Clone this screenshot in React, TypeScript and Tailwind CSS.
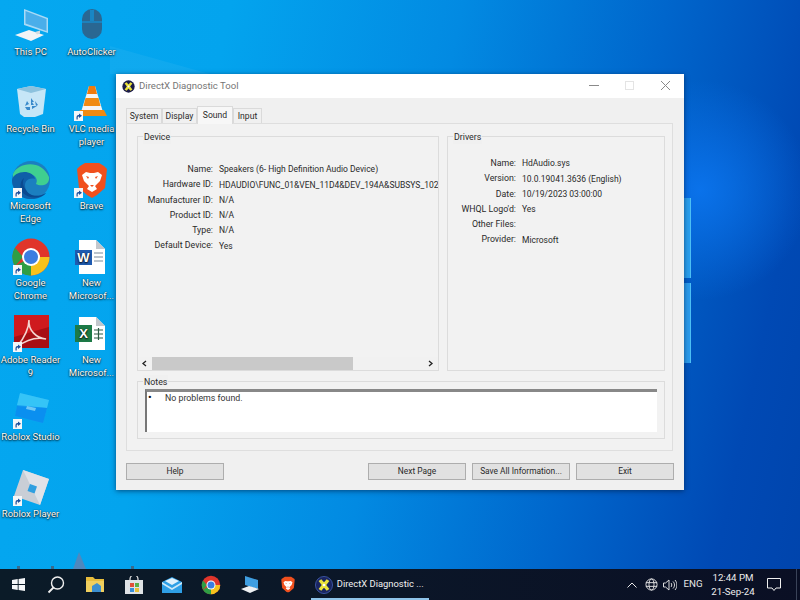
import React from "react";

const Shortcut = () => (
  <svg viewBox="0 0 9 10" className="absolute left-[2px] bottom-[1px] w-[9px] h-[10px]">
    <rect width="9" height="10" fill="#f4f6f8" />
    <path d="M2.5 8.5V6a2 2 0 0 1 2-2h.5V2.500L8 4.700 5 7V5.500h-.5a.8.8 0 0 0-.8.8v2.200z" fill="#1d4f9c" />
  </svg>
);

const Ico = ({ children, shortcut }: { children: React.ReactNode; shortcut?: boolean }) => (
  <div className="relative w-[40px] h-[38px] shrink-0">
    <svg viewBox="0 0 40 38" className="w-[40px] h-[38px]">{children}</svg>
    {shortcut && <Shortcut />}
  </div>
);

const ChromeArt = () => (
  <g>
    <circle cx="20" cy="19" r="18.5" fill="#e0352b" />
    <path d="M20 19 L4 28.300 A18.500 18.500 0 0 0 20 37.500 Z" fill="#2f9e44" />
    <path d="M4 28.300A18.500 18.500 0 0 1 4 9.800L12 19z" fill="#2f9e44" />
    <path d="M20 19h18.500A18.500 18.500 0 0 1 20 37.500z" fill="#f6c21c" />
    <circle cx="20" cy="19" r="9" fill="#fff" />
    <circle cx="20" cy="19" r="7" fill="#3b7de0" />
  </g>
);

const BraveArt = () => (
  <g>
    <path d="M8 5l5-3h14l5 3 3 3-2 19-8 7-5 3-5-3-8-7-2-19z" fill="#f0501e" />
    <path d="M20 31l-5-3 2-3-5-5-2-6 4-3 4 1h4l4-1 4 3-2 6-5 5 2 3z" fill="#fff" />
    <path d="M14 15l3 1-1 2zM26 15l-3 1 1 2zM18 24h4l-2 2z" fill="#f0501e" />
  </g>
);

const DirectX = ({ s, ring }: { s: number; ring?: boolean }) => (
  <svg viewBox="0 0 20 20" width={s} height={s} className="shrink-0">
    <circle cx="10" cy="10" r="9.500" fill={ring ? "#1a2560" : "#1c1c48"} stroke={ring ? "#4a68c0" : "none"} strokeWidth="0.8" />
    <path d="M4 5.500 7 3.500 10 7l3-3.500 3 2L12.500 10l3.500 4.500-3 2L10 13l-3 3.500-3-2L7.500 10z" fill="#ece33a" />
    <circle cx="10" cy="10" r="1.500" fill="#fff" />
  </svg>
);

const desktop: { label: string[]; shortcut?: boolean; art: React.ReactNode }[] = [
  {
    label: ["This PC"],
    art: (
      <g>
        <path d="M13 2 37 11V26L13 18z" fill="#a8daf6" />
        <path d="M14.500 4 35.500 12V24L14.500 16.500z" fill="#4aaeea" />
        <path d="M4 28 18 23 33 28 20 34z" fill="#f2f4f6" />
        <path d="M24 25l5-1.500v3l-3 1z" fill="#d5dde2" />
      </g>
    ),
  },
  {
    label: ["Recycle Bin"],
    art: (
      <g>
        <path d="M6 5 20 2 35 5 32 30 24 33H13L9 30z" fill="#c6e6f7" />
        <path d="M6 5 20 2 35 5 20 9z" fill="#8cc2de" />
        <path d="M20 14l3 4h-2l2 3-3 0zM14 22l2-5 2 3zM26 22l-5 3v-3z" fill="#3a8acb" />
        <path d="M14 23h5v3h-3zM24 17l3 4-2 1z" fill="#3a8acb" />
      </g>
    ),
  },
  {
    label: ["Microsoft", "Edge"],
    shortcut: true,
    art: (
      <g>
        <circle cx="20" cy="19" r="19" fill="#1b7fc0" />
        <path d="M2 13C6 2 30-3 38 16c1 8-8 10-13 7 3-6-3-11-10-10C9 13 4 15 2 19z" fill="#3fcf90" />
        <path d="M1 19C3 9 22 8 24 18c-8-2-12 4-9 11 3 6 12 8 20 3-6 8-24 9-30-2-3-4-4-7-4-11z" fill="#0f5fa8" />
        <path d="M15 29c3 6 12 8 20 3-4 5-16 7-23 0-4-5-3-12 1-15-2 5-1 8 2 12z" fill="#0b4a90" />
      </g>
    ),
  },
  { label: ["Google", "Chrome"], shortcut: true, art: <ChromeArt /> },
  {
    label: ["Adobe Reader", "9"],
    shortcut: true,
    art: (
      <g>
        <rect x="3" y="0" width="35" height="33" fill="#a80f14" />
        <path d="M3 0H38V12L3 22z" fill="#cf1a1e" />
        <path d="M18 5c-1 10 7 18 17 19-9-2-20 1-29 8 7-9 12-18 12-27z" fill="none" stroke="#f5d5d0" strokeWidth="1.600" />
      </g>
    ),
  },
  {
    label: ["Roblox Studio"],
    shortcut: true,
    art: (
      <g>
        <path d="M9 1 38 8 32 31 4 24z" fill="#1aa3f0" />
        <path d="M9 1 38 8 36 16 6 13z" fill="#35c4f7" />
        <path d="M6 14 36 16 32 31 4 24z" fill="#0a8ff0" />
        <path d="M16 14l9 2-1 3-9-2z" fill="#6fc8f5" />
      </g>
    ),
  },
  {
    label: ["Roblox Player"],
    shortcut: true,
    art: (
      <g>
        <path d="M12 1 38 10 29 36 3 27z" fill="#c9ced6" />
        <path d="M12 1 38 10 29 36z" fill="#dfe2e8" />
        <path d="M19 15l7 2.500-2.500 7-7-2.500z" fill="#2f9fe0" />
      </g>
    ),
  },
  {
    label: ["AutoClicker"],
    art: (
      <g>
        <rect x="10" y="2" width="20" height="30" rx="10" fill="#2a6792" />
        <path d="M19 3v11M21 3v11M10 15h20" stroke="#0f9ce6" strokeWidth="1.200" />
      </g>
    ),
  },
  {
    label: ["VLC media", "player"],
    shortcut: true,
    art: (
      <g>
        <path d="M17 2h6l8 26H9z" fill="#f4f4f4" />
        <path d="M17 2h6l2 8H15z" fill="#ef7b0e" />
        <path d="M13.500 14h13l2 8h-17z" fill="#f08a12" />
        <path d="M8 26h24l3 6H5z" fill="#f08a12" />
      </g>
    ),
  },
  { label: ["Brave"], shortcut: true, art: <BraveArt /> },
  {
    label: ["New", "Microsof..."],
    art: (
      <g>
        <path d="M7 2H24L33 11V36H7z" fill="#fff" />
        <path d="M24 2V11H33z" fill="#c3c7cc" />
        <rect x="3" y="12" width="17" height="15" fill="#1f5bb0" />
        <text x="11.500" y="24" textAnchor="middle" fontSize="13" fontWeight="700" fill="#fff" fontFamily="Liberation Sans, sans-serif">W</text>
        <path d="M22 15h9M22 19h9M22 23h9" stroke="#7a8a99" strokeWidth="1.200" />
      </g>
    ),
  },
  {
    label: ["New", "Microsof..."],
    art: (
      <g>
        <path d="M7 2H24L33 11V35H7z" fill="#fff" />
        <path d="M24 2V11H33z" fill="#c3c7cc" />
        <rect x="3" y="10" width="17" height="17" fill="#1d7a47" />
        <text x="11.500" y="23" textAnchor="middle" fontSize="13" fontWeight="700" fill="#fff" fontFamily="Liberation Sans, sans-serif">X</text>
        <path d="M22 15h9M22 19h9M22 23h9M26.500 13v12" stroke="#2e5a44" strokeWidth="1.200" />
      </g>
    ),
  },
];

const Row = ({ k, v, w }: { k: string; v: string; w: string }) => (
  <div className="flex h-[15.25px] items-center whitespace-nowrap">
    <div className={`${w} shrink-0 text-right pr-[6px]`}>{k}</div>
    <div className="text-[8.5px]">{v}</div>
  </div>
);

const Legend = ({ children }: { children: React.ReactNode }) => (
  <div className="absolute -top-[7px] left-[5px] bg-[#f0f0f0] px-[1px] leading-[14px]">{children}</div>
);

const Btn = ({ children }: { children: React.ReactNode }) => (
  <div className="w-[98px] h-[17px] bg-[#e1e1e1] border border-[#adadad] flex items-center justify-center whitespace-nowrap text-[8.4px]">{children}</div>
);

const Tab = ({ children, active, w }: { children: React.ReactNode; active?: boolean; w: string }) => (
  <div
    className={`${w} flex items-center justify-center border border-[#dadada] border-b-0 text-[8.6px] ${
      active ? "h-[18px] bg-[#f7f7f7] z-10 -mb-[1px] relative" : "h-[15px] bg-[#f0f0f0]"
    }`}
  >
    {children}
  </div>
);

const TaskIcon = ({ children, w = "w-[38.7px]" }: { children: React.ReactNode; w?: string }) => (
  <div className={`${w} h-full flex items-center justify-center shrink-0`}>{children}</div>
);

export default function App() {
  return (
    <div className="relative w-[800px] h-[600px] overflow-hidden font-['Roboto','Noto_Sans',sans-serif] bg-[radial-gradient(circle_at_700px_190px,#0a72ea_0px,rgba(10,114,234,0)_110px),linear-gradient(102deg,#05a8f0_0%,#03a4ee_25%,#028ae2_50%,#0066cc_72%,#0049b4_90%,#0044ac_100%)]">
      {/* wallpaper details */}
      <div className="absolute left-[684px] top-[198px] w-[7px] h-[80px] bg-[#2aa0ee] border-r border-[#4dc0f5]" />
      <div className="absolute left-[684px] top-[283px] w-[7px] h-[80px] bg-[#2b9cec] border-r border-[#4dc0f5]" />
      <svg className="absolute left-[0px] top-[545px]" width="220" height="24" viewBox="0 0 220 24">
        <path d="M17 24v-3h3v3zM51 24v-3h3v3zM131 24v-3h3v3z" fill="#3a6a8c" />
        <path d="M73 24l6-17 7 17z" fill="#6a7fae" opacity="0.75" />
      </svg>
      <svg className="absolute left-[110px] top-[46px]" width="100" height="28" viewBox="0 0 100 28">
        <path d="M0 0 100 28H0z" fill="#fff" opacity="0.05" />
      </svg>

      {/* desktop icons */}
      <div className="absolute left-[0px] top-[7px] grid grid-flow-col grid-rows-[repeat(7,77px)] grid-cols-[61px_61px] text-white text-[9.5px] leading-[12.5px] [text-shadow:0_1px_2px_rgba(0,0,0,0.9),0_0_1px_rgba(0,0,0,0.8)]">
        {desktop.map((d, i) => (
          <div key={i} className="flex flex-col items-center">
            <Ico shortcut={d.shortcut}>{d.art}</Ico>
            <div className="text-center whitespace-nowrap pt-[1px]">
              {d.label.map((l) => (
                <div key={l}>{l}</div>
              ))}
            </div>
          </div>
        ))}
      </div>

      {/* window */}
      <div className="absolute left-[116px] top-[74px] w-[568px] h-[416px] bg-[#f0f0f0] flex flex-col text-[8.8px] text-[#2a2a2a] shadow-[0_1px_5px_rgba(0,30,70,0.65)]">
        <div className="h-[24px] bg-white flex items-center pl-[6px] shrink-0">
          <DirectX s={13} />
          <div className="ml-[4px] text-[#757575] text-[9.6px]">DirectX Diagnostic Tool</div>
          <div className="ml-auto flex items-center h-full">
            <svg width="82" height="24" viewBox="0 0 82 24" className="mr-[13px]">
              <path d="M0 11.500h10" stroke="#8a8a8a" />
              <rect x="36.500" y="7.500" width="8" height="8" fill="none" stroke="#e4e4e4" />
              <path d="M72 7l9 9M81 7l-9 9" stroke="#8a8a8a" />
            </svg>
          </div>
        </div>

        <div className="flex pl-[10px] pt-[8px] items-end shrink-0 h-[25px]">
          <Tab w="w-[36px]">System</Tab>
          <Tab w="w-[35px]">Display</Tab>
          <Tab active w="w-[36px]">Sound</Tab>
          <Tab w="w-[29px]">Input</Tab>
        </div>

        <div className="mx-[10px] w-[547px] h-[328px] border border-[#dedede] bg-[#f2f2f2] pl-[10px] pr-[7px] pt-[12px] shrink-0">
          <div className="flex gap-[8px] h-[235px]">
            <div className="relative w-[302px] border border-[#dcdcdc] flex flex-col">
              <Legend>Device</Legend>
              <div className="flex-1 pt-[25px] overflow-hidden">
                <Row w="w-[81px]" k="Name:" v="Speakers (6- High Definition Audio Device)" />
                <Row w="w-[81px]" k="Hardware ID:" v="HDAUDIO\FUNC_01&VEN_11D4&DEV_194A&SUBSYS_102" />
                <Row w="w-[81px]" k="Manufacturer ID:" v="N/A" />
                <Row w="w-[81px]" k="Product ID:" v="N/A" />
                <Row w="w-[81px]" k="Type:" v="N/A" />
                <Row w="w-[81px]" k="Default Device:" v="Yes" />
              </div>
              <div className="h-[13px] flex items-center bg-[#f1f1f1] shrink-0">
                <svg width="14" height="13" viewBox="0 0 14 13" className="shrink-0">
                  <path d="M8 4 5 6.500 8 9" fill="none" stroke="#222" strokeWidth="1.300" />
                </svg>
                <div className="w-[201px] h-full bg-[#c9c9c9]" />
                <div className="flex-1" />
                <svg width="14" height="13" viewBox="0 0 14 13" className="shrink-0">
                  <path d="M5 4 8 6.500 5 9" fill="none" stroke="#222" strokeWidth="1.300" />
                </svg>
              </div>
            </div>
            <div className="relative w-[218px] border border-[#dcdcdc] pt-[19px]">
              <Legend>Drivers</Legend>
              <Row w="w-[74px]" k="Name:" v="HdAudio.sys" />
              <Row w="w-[74px]" k="Version:" v="10.0.19041.3636 (English)" />
              <Row w="w-[74px]" k="Date:" v="10/19/2023 03:00:00" />
              <Row w="w-[74px]" k="WHQL Logo'd:" v="Yes" />
              <Row w="w-[74px]" k="Other Files:" v="" />
              <Row w="w-[74px]" k="Provider:" v="Microsoft" />
            </div>
          </div>
          <div className="relative mt-[10px] w-[528px] h-[58px] border border-[#dcdcdc] px-[7px] pt-[7px]">
            <Legend>Notes</Legend>
            <div className="h-[43px] bg-white border-t-[3px] border-l-2 border-t-[#888888] border-l-[#777777] flex items-start pl-[1px] text-[#333]">
              <div className="w-[17px] text-[#111] leading-[12px] text-[11px]">•</div>
              <div className="leading-[12px] text-[8.8px]">No problems found.</div>
            </div>
          </div>
        </div>

        <div className="flex px-[10px] pt-[12px] gap-[6px]">
          <Btn>Help</Btn>
          <div className="flex-1" />
          <Btn>Next Page</Btn>
          <Btn>Save All Information...</Btn>
          <Btn>Exit</Btn>
        </div>
      </div>

      {/* taskbar */}
      <div className="absolute left-0 right-0 bottom-0 h-[31px] bg-[linear-gradient(90deg,#0b1b28,#0b1628_50%,#0a0f24)] flex items-center text-white">
        <TaskIcon w="w-[37px]">
          <svg width="13" height="13" viewBox="0 0 13 13">
            <path d="M0 2l5.700-.9v5H0zM6.600 1 13 0v6.100H6.600zM0 7h5.700v5L0 11.100zM6.600 7H13v6l-6.400-1z" fill="#f4f6f8" />
          </svg>
        </TaskIcon>
        <TaskIcon>
          <svg width="18" height="18" viewBox="0 0 18 18">
            <circle cx="10.500" cy="7" r="6" fill="none" stroke="#f0f0f0" strokeWidth="1.400" />
            <path d="M6.500 11.500 1.500 16.500" stroke="#f0f0f0" strokeWidth="1.800" />
          </svg>
        </TaskIcon>
        <TaskIcon>
          <svg width="18" height="15" viewBox="0 0 18 15">
            <path d="M0 0h7l2 2h9v13H0z" fill="#e8bd3c" />
            <path d="M0 4h18v11H0z" fill="#f0cf5e" />
            <path d="M6 15V9l5-3 4 3v6z" fill="#3b8fd0" />
          </svg>
        </TaskIcon>
        <TaskIcon>
          <svg width="18" height="18" viewBox="0 0 18 18">
            <path d="M5 5V3a4 4 0 0 1 8 0v2" fill="none" stroke="#e6e6e6" strokeWidth="1.200" />
            <path d="M0 4h18v14H0z" fill="#dfe3e6" />
            <path d="M5 7h4v4H5z" fill="#e0503a" />
            <path d="M10 7h4v4h-4z" fill="#5ab04a" />
            <path d="M5 12h4v4H5z" fill="#3a8fd8" />
            <path d="M10 12h4v4h-4z" fill="#e8c03a" />
          </svg>
        </TaskIcon>
        <TaskIcon>
          <svg width="20" height="16" viewBox="0 0 20 16">
            <path d="M0 5 10 0l10 5v11H0z" fill="#2e9fe6" />
            <path d="M0 5l10 6 10-6v2l-10 6L0 7z" fill="#cbe8f8" />
            <path d="M3 4 10 1l7 3-7 4z" fill="#fff" opacity="0.85" />
          </svg>
        </TaskIcon>
        <TaskIcon>
          <svg width="20" height="20" viewBox="0 0 40 38">
            <ChromeArt />
          </svg>
        </TaskIcon>
        <TaskIcon>
          <svg width="20" height="18" viewBox="0 0 20 18">
            <path d="M5 0 18 4v9L5 9z" fill="#3f9ee0" />
            <path d="M1 13l8-3 10 3-9 4z" fill="#eef0f2" />
          </svg>
        </TaskIcon>
        <TaskIcon>
          <svg width="18" height="19" viewBox="0 0 40 38">
            <BraveArt />
          </svg>
        </TaskIcon>
        <div className="w-[118px] h-full relative flex items-center pl-[4px] gap-[4px] ml-[3px] shrink-0">
          <DirectX s={18} ring />
          <div className="text-[9.4px] whitespace-nowrap text-[#f2f2f2]">DirectX Diagnostic ...</div>
          <div className="absolute left-0 right-0 bottom-0 h-[2px] bg-[#8fc4ea]" />
        </div>
        <div className="ml-auto flex items-center h-full shrink-0 pr-[12px] relative text-[9.7px] text-[#e8e8e8] whitespace-nowrap">
          <div className="w-[20px] flex justify-center">
            <svg width="10" height="6" viewBox="0 0 10 6">
              <path d="M.5 5.500 5 1l4.500 4.500" fill="none" stroke="#e8e8e8" />
            </svg>
          </div>
          <div className="w-[18px] flex justify-center">
            <svg width="13" height="13" viewBox="0 0 14 14">
              <circle cx="7" cy="7" r="6" fill="none" stroke="#e8e8e8" />
              <ellipse cx="7" cy="7" rx="2.700" ry="6" fill="none" stroke="#e8e8e8" />
              <path d="M1 5h12M1 9h12" stroke="#e8e8e8" />
            </svg>
          </div>
          <div className="w-[20px] flex justify-center">
            <svg width="14" height="12" viewBox="0 0 14 12">
              <path d="M.5 4h2L6 1v10L2.500 8h-2z" fill="none" stroke="#dcdcdc" />
              <path d="M8 4c1 1 1 3 0 4M10 2.500c2 2 2 5 0 7M12 1c2.500 3 2.500 7 0 10" fill="none" stroke="#dcdcdc" />
            </svg>
          </div>
          <div className="w-[26px] text-center">ENG</div>
          <div className="w-[54px] text-center leading-[14px] text-[#ededed]">
            <div>12:44 PM</div>
            <div>21-Sep-24</div>
          </div>
          <div className="w-[28px] flex justify-center">
            <svg width="14" height="15" viewBox="0 0 14 15">
              <path d="M.5 1.500h13v9.500H9l-2 2.500-2-2.500H.5z" fill="none" stroke="#f0f0f0" />
            </svg>
          </div>
          <div className="absolute right-[3px] top-0 bottom-0 w-[1px] bg-[#3a4358]" />
        </div>
      </div>
    </div>
  );
}
